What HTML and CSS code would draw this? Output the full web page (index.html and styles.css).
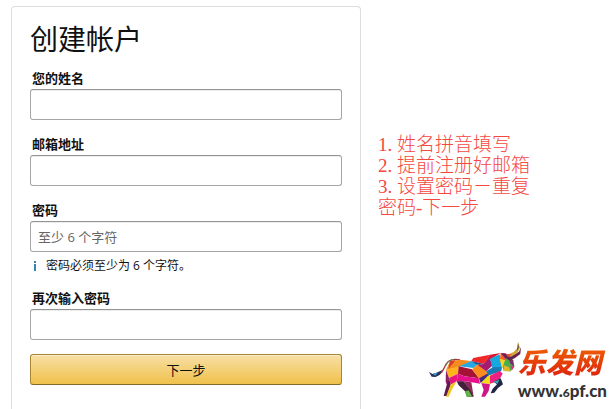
FILE: index.html
```html
<!DOCTYPE html>
<html lang="zh-CN">
<head>
  <meta charset="UTF-8">
  <title>创建帐户</title>
  <link rel="stylesheet" href="styles.css">
</head>
<body>

  <main class="page">
    <form class="card">
      <h1>创建帐户</h1>

      <div class="field">
        <label for="name">您的姓名</label>
        <input id="name" type="text">
      </div>

      <div class="field">
        <label for="email">邮箱地址</label>
        <input id="email" type="email">
      </div>

      <div class="field">
        <label for="password">密码</label>
        <input id="password" type="password" placeholder="至少 6 个字符">
        <p class="hint">
          <svg class="info" viewBox="0 0 3 10" shape-rendering="crispEdges" aria-hidden="true">
            <path d="M1 0h2v2H1zM1 3h2v7H1z" fill="#2b87b8"/>
          </svg>
          密码必须至少为 6 个字符。
        </p>
      </div>

      <div class="field">
        <label for="password2">再次输入密码</label>
        <input id="password2" type="password">
      </div>

      <button type="submit">下一步</button>
    </form>

    <aside class="side">
      <div class="notes">
        <p>1. 姓名拼音填写</p>
        <p>2. 提前注册好邮箱</p>
        <p>3. 设置密码－重复密码-下一步</p>
      </div>

      <div class="logo">
        <svg class="bull" viewBox="21 21 282 171" aria-hidden="true">
          <!-- tail -->
          <path d="M117 78C100 73 82 77 75 91C68 105 63 121 46 124" fill="none" stroke="#a8323f" stroke-width="4"/>
          <path d="M98 76C84 78 78 86 74 96" fill="none" stroke="#4a9a55" stroke-width="3"/>
          <path d="M24 114L35 120L50 115L64 108L56 122L44 129L32 128Z" fill="#26345c"/>
          <path d="M35 119L50 116L43 125Z" fill="#35a9c8"/>
          <!-- hind quarters -->
          <path d="M87 82L116 77L151 81L124 95L113 99L75 108Z" fill="#f58a1f"/>
          <path d="M87 82L104 78L82 104Z" fill="#d33a2c"/>
          <path d="M75 108L113 97L111 119L84 132Z" fill="#ffb21c"/>
          <path d="M75 108L84 132L80 158L74 143Z" fill="#8f1d68"/>
          <path d="M84 132L111 119L107 142L89 152Z" fill="#e8147d"/>
          <path d="M84 132L89 152L78 186H68L76 157Z" fill="#5f1c50"/>
          <path d="M89 152L107 142L94 164L83 188H75Z" fill="#f4c51c"/>
          <!-- belly -->
          <path d="M113 97L153 106L174 133L130 127L111 119Z" fill="#a51236"/>
          <path d="M111 119L130 127L174 133L177 149L144 143L107 142Z" fill="#e5108a"/>
          <path d="M107 142L127 142L151 170L158 188H138L132 172L113 154Z" fill="#44203d"/>
          <path d="M127 142L151 145L158 188L147 168Z" fill="#8d2a55"/>
          <path d="M132 172L143 169L154 188H137Z" fill="#62b447"/>
          <path d="M114 97L151 81L171 90L158 102Z" fill="#29a8e0"/>
          <path d="M151 81L187 89L171 94Z" fill="#194f9b"/>
          <path d="M158 102L171 90L196 112L201 125L174 133L153 106Z" fill="#ff8a1d"/>
          <path d="M174 133L199 119L205 124L179 148Z" fill="#432a7c"/>
          <!-- back and shoulder -->
          <path d="M151 81L157 72L207 62L187 89Z" fill="#ef2727"/>
          <path d="M207 62L239 57L187 89Z" fill="#dc1630"/>
          <path d="M187 89L207 74L215 94L196 112L171 94Z" fill="#a41b70"/>
          <path d="M207 74L236 61L243 99L215 106Z" fill="#18a8e1"/>
          <path d="M196 112L215 100L243 99L241 111L201 125Z" fill="#187bb4"/>
          <path d="M239 57L263 69L258 80L237 76Z" fill="#fa651e"/>
          <path d="M236 75L257 80L246 99L242 99Z" fill="#ffd01d"/>
          <!-- front legs -->
          <path d="M179 148L201 125L211 123L207 151L184 147Z" fill="#f1d91b"/>
          <path d="M181 147L207 151L203 171L192 188H181L188 168Z" fill="#cf1687"/>
          <path d="M207 125L236 110L245 119L236 135L217 146L207 149Z" fill="#ee2180"/>
          <path d="M218 143L239 133L246 151L231 162L220 176L209 178L215 164L228 151Z" fill="#202545"/>
          <path d="M218 143L235 137L230 149Z" fill="#33a8bc"/>
          <!-- head and horns -->
          <path d="M239 57L255 58L263 70L253 76Z" fill="#c82a83"/>
          <path d="M253 76L264 66L276 79L280 98L269 112L248 111L245 100Z" fill="#4bad4d"/>
          <path d="M248 94L263 99L269 112L248 111Z" fill="#e3b629"/>
          <path d="M264 66L276 79L280 98L267 88Z" fill="#7e2e66"/>
          <path d="M268 94L280 98L273 109Z" fill="#e62c80"/>
          <path d="M240 57L254 60L265 68L281 60L294 53L300 39L298 60L282 72L266 80L251 70Z" fill="#64264e"/>
          <path d="M259 62L278 54L289 43L292 25L297 42L289 57L270 68Z" fill="#d5a83a"/>
          <path d="M289 43L291 25L293 41L286 53Z" fill="#333750"/>
          <path d="M255 61L273 60L261 69Z" fill="#ec482e"/>
        </svg>
        <div class="brand">
          <strong>乐发网</strong>
          <span>www.<small>6</small>pf.cn</span>
        </div>
      </div>
    </aside>
  </main>

</body>
</html>
```

FILE: styles.css
```css
* {
  box-sizing: border-box;
}

body {
  margin: 0;
  background-color: #fff;
  color: #111;
  font-family: "Open Sans", "Noto Sans CJK SC", sans-serif;
  font-size: 13px;
}

.page {
  display: flex;
  gap: 17px;
  min-height: 100vh;
  padding: 6px 9px 0 11px;
}

/* sign-up form */
.card {
  flex: 0 0 350px;
  padding: 11px 18px 24px;
  border: 1px solid #ddd;
  border-bottom: none;
  border-radius: 4px 4px 0 0;
}

h1 {
  margin: 0 0 8px;
  font-size: 28px;
  font-weight: 400;
  line-height: 42px;
}

.field {
  margin-bottom: 14px;
}

label {
  display: block;
  padding-left: 2px;
  font-weight: bold;
  line-height: 21px;
}

input {
  display: block;
  width: 100%;
  height: 31px;
  padding: 0 7px;
  border: 1px solid #a6a6a6;
  border-top-color: #949494;
  border-radius: 3px;
  box-shadow: inset 0 1px 0 rgba(0,0,0,0.07);
  font: inherit;
}

input::placeholder {
  color: #666;
}

.hint {
  display: flex;
  align-items: center;
  gap: 10px;
  margin: 6px 0 0;
  padding-left: 3px;
  font-size: 12px;
  line-height: 16px;
}

.info {
  flex: none;
  width: 3px;
  height: 10px;
}

button {
  display: block;
  width: 100%;
  height: 31px;
  border: 1px solid #a88734;
  border-bottom-color: #846a29;
  border-radius: 3px;
  background: linear-gradient(#f7dfa5, #f0c14b);
  box-shadow: inset 0 1px 0 rgba(255,255,255,0.4);
  color: #111;
  font: inherit;
  cursor: pointer;
}

button:hover {
  background: linear-gradient(#f5d78e, #eeb933);
}

/* notes and logo */
.side {
  display: flex;
  flex: 1;
  flex-direction: column;
  justify-content: space-between;
  padding: 128px 0 6px;
}

.notes {
  max-width: 160px;
  color: #f5483f;
  font-family: "Liberation Serif", "Noto Sans CJK SC", serif;
  font-size: 19px;
  font-weight: 300;
  line-height: 21px;
}

.notes p {
  margin: 0;
}

.logo {
  display: flex;
  align-self: flex-end;
  align-items: flex-start;
}

.bull {
  width: 94px;
  height: 57px;
}

.brand {
  display: flex;
  flex-direction: column;
  margin-left: -4px;
}

.brand strong {
  background: linear-gradient(#f26a00, #dc1c10);
  background-clip: text;
  -webkit-background-clip: text;
  color: transparent;
  font-family: "Noto Sans CJK SC", sans-serif;
  font-size: 28px;
  font-style: italic;
  font-weight: 900;
  line-height: 40px;
}

.brand span {
  color: #333;
  font-family: Lato, sans-serif;
  font-size: 17px;
  font-weight: 900;
  line-height: 20px;
}

.brand small {
  font-size: 12px;
}
```
